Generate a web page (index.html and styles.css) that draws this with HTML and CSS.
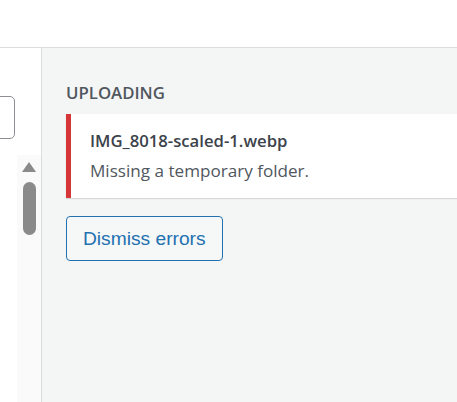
FILE: index.html
```html
<!DOCTYPE html>
<html>
<head>
<meta charset="utf-8">
<link rel="stylesheet" href="styles.css">
</head>
<body>
<div class="header"></div>
<div class="main">
  <div class="left">
    <div class="input"></div>
    <div class="scroll">
      <div class="arrow"></div>
      <div class="thumb"></div>
    </div>
  </div>
  <div class="side">
    <h2 class="title">UPLOADING</h2>
    <div class="error">
      <div class="fname">IMG_8018-scaled-1.webp</div>
      <div class="msg">Missing a temporary folder.</div>
    </div>
    <button class="dismiss">Dismiss errors</button>
  </div>
</div>
</body>
</html>
```
FILE: styles.css
```css
html, body {
  margin: 0;
  padding: 0;
  height: 100%;
  overflow: hidden;
  background: #fff;
  font-family: "Open Sans", "Noto Sans", sans-serif;
}
.header {
  height: 47px;
  border-bottom: 1px solid #dcdcde;
  background: #fff;
}
.main {
  display: flex;
  height: calc(100% - 48px);
}
.left {
  width: 41px;
  flex: none;
  border-right: 1px solid #dcdcde;
  background: #fff;
  display: flex;
  flex-direction: column;
}
.input {
  margin-top: 48px;
  margin-left: -20px;
  width: 33px;
  height: 41px;
  border: 1px solid #8c8f94;
  border-radius: 5px;
  background: #fff;
}
.scroll {
  margin-top: 16px;
  margin-left: 17px;
  flex: 1;
  background: #fafafa;
  display: flex;
  flex-direction: column;
  align-items: center;
}
.arrow {
  margin-top: 7px;
  width: 0;
  height: 0;
  border-left: 7.5px solid transparent;
  border-right: 7.5px solid transparent;
  border-bottom: 10px solid #8a8a8a;
}
.thumb {
  margin-top: 10px;
  width: 13px;
  height: 53px;
  border-radius: 7px;
  background: #8a8a8a;
}
.side {
  flex: 1;
  background: #f4f5f5;
  padding-left: 24px;
  min-width: 0;
}
.title {
  margin: 35px 0 0;
  font-size: 16.8px;
  font-weight: 600;
  color: #50575e;
  line-height: 20px;
}
.error {
  margin-top: 11px;
  background: #fff;
  border-left: 5px solid #d63638;
  box-shadow: 0 1px 1px rgba(0, 0, 0, 0.12);
  height: 84px;
  padding: 14px 0 0 19px;
  box-sizing: border-box;
  margin-right: -20px;
}
.fname {
  font-size: 16.7px;
  font-weight: 600;
  color: #3c434a;
  line-height: 26px;
}
.msg {
  margin-top: 4px;
  font-size: 17.1px;
  color: #50575e;
  line-height: 26px;
}
.dismiss {
  margin-top: 18px;
  height: 45px;
  padding: 0 16px;
  border: 1px solid #2271b1;
  border-radius: 4px;
  background: #f6f7f7;
  color: #2271b1;
  font-family: "Liberation Sans", Arial, sans-serif;
  font-size: 19.2px;
  display: block;
}
```
